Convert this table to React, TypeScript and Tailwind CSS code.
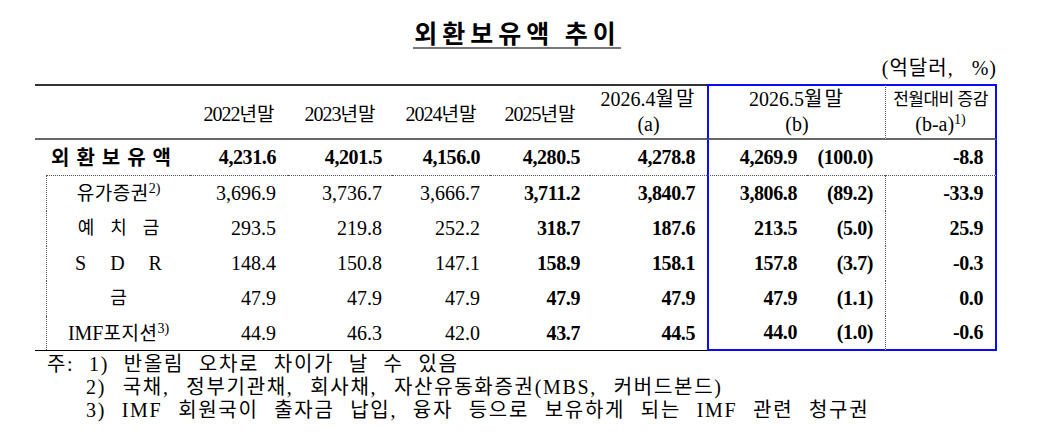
import React from 'react';

const cols = 'grid grid-cols-[155px_98px_104px_98px_100px_117px_100px_78px_112px]';
const pads = ['pr-[12px]', 'pr-[10px]', 'pr-[10px]', 'pr-[10px]', 'pr-[12px]', 'pr-[10px]', 'pr-[12px]', 'pr-[12px]'];
const BLUE = 'border-[#0a0aff]';

const total = ['4,231.6', '4,201.5', '4,156.0', '4,280.5', '4,278.8', '4,269.9', '(100.0)', '-8.8'];

const rows: { label: React.ReactNode; values: string[] }[] = [
  {
    label: (
      <span className="text-[19px] tracking-[0.5px]">
        유가증권<sup className="text-[14px] tracking-normal">2)</sup>
      </span>
    ),
    values: ['3,696.9', '3,736.7', '3,666.7', '3,711.2', '3,840.7', '3,806.8', '(89.2)', '-33.9'],
  },
  {
    label: (
      <span className="flex gap-[16px] text-[18px]">
        <span>예</span>
        <span>치</span>
        <span>금</span>
      </span>
    ),
    values: ['293.5', '219.8', '252.2', '318.7', '187.6', '213.5', '(5.0)', '25.9'],
  },
  {
    label: (
      <span className="flex gap-[24px]">
        <span>S</span>
        <span>D</span>
        <span>R</span>
      </span>
    ),
    values: ['148.4', '150.8', '147.1', '158.9', '158.1', '157.8', '(3.7)', '-0.3'],
  },
  {
    label: <span className="text-[18px]">금</span>,
    values: ['47.9', '47.9', '47.9', '47.9', '47.9', '47.9', '(1.1)', '0.0'],
  },
  {
    label: (
      <span>
        IMF<span className="text-[19px] tracking-[0.5px]">포지션</span>
        <sup className="text-[14px]">3)</sup>
      </span>
    ),
    values: ['44.9', '46.3', '42.0', '43.7', '44.5', '44.0', '(1.0)', '-0.6'],
  },
];

function YearHead({ year }: { year: string }) {
  return (
    <div className="flex items-center justify-center border-t-2 border-b-2 border-t-[#333] border-b-[#666] pt-[4px]">
      <span>
        <span className="tracking-[-1px]">{year}</span>
        <span className="text-[19px]">년말</span>
      </span>
    </div>
  );
}

function SubRow({ label, values, last }: { label: React.ReactNode; values: string[]; last: boolean }) {
  const bottom = last ? 'border-b border-b-black' : '';
  const blueBottom = last ? `border-b-2 ${BLUE}` : '';
  return (
    <div className={`${cols} h-[35px]`}>
      <div className={`pl-[11px] ${bottom}`}>
        <div className="flex h-full items-center justify-center border-l border-dotted border-[#555]">{label}</div>
      </div>
      {values.slice(0, 5).map((v, i) => (
        <div
          key={i}
          className={`flex items-center justify-end ${pads[i]} ${bottom} ${i >= 3 ? 'font-bold tracking-[-0.4px]' : ''}`}
        >
          {v}
        </div>
      ))}
      <div className={`flex items-center justify-end border-l-2 ${BLUE} ${blueBottom} ${pads[5]} font-bold tracking-[-0.4px]`}>
        {values[5]}
      </div>
      <div className={`flex items-center justify-end ${blueBottom} ${pads[6]} font-bold tracking-[-0.4px]`}>
        {values[6]}
      </div>
      <div
        className={`flex items-center justify-end border-l border-l-[#555] [border-left-style:dotted] border-r-2 border-r-[#0a0aff] ${blueBottom} ${pads[7]} font-bold tracking-[-0.4px]`}
      >
        {values[7]}
      </div>
    </div>
  );
}

export default function App() {
  return (
    <div className="h-[448px] w-[1054px] overflow-hidden bg-white pt-[17px] font-['Liberation_Serif','Noto_Sans_CJK_KR',serif] text-[20px] text-black">
      <div className="flex justify-center pr-[20px]">
        <h1 className="inline-block border-b-2 border-[#777] pl-[1px] font-['Noto_Sans_CJK_KR',sans-serif] text-[25px] font-bold leading-[30px] tracking-[5px]">
          외환보유액 추이
        </h1>
      </div>

      <div className="ml-[35px] w-[962px] pt-[8px] pb-[5px] text-right text-[20px] leading-[22px] tracking-[1px]">
        (억달러,&nbsp;&nbsp;&nbsp;%)
      </div>

      <div className="ml-[35px] w-[962px] leading-[25px]">
        {/* header */}
        <div className={`${cols} h-[56px]`}>
          <div className="border-t-2 border-b-2 border-t-[#333] border-b-[#666]" />
          <YearHead year="2022" />
          <YearHead year="2023" />
          <YearHead year="2024" />
          <YearHead year="2025" />
          <div className="flex flex-col items-center justify-center border-t-2 border-b-2 border-t-[#333] border-b-[#666]">
            <span>
              2026.4<span className="tracking-[2px]">월말</span>
            </span>
            <span>(a)</span>
          </div>
          <div className={`col-span-2 flex flex-col items-center justify-center border-t-2 border-l-2 ${BLUE} border-b-2 border-b-[#666]`}>
            <span>
              2026.5<span className="tracking-[2px]">월말</span>
            </span>
            <span>(b)</span>
          </div>
          <div className="flex flex-col items-center justify-center border-t-2 border-r-2 border-t-[#0a0aff] border-r-[#0a0aff] border-b-2 border-b-[#666] border-l border-l-[#555] [border-left-style:dotted]">
            <span className="text-[17px] tracking-[-0.5px]">전월대비 증감</span>
            <span>
              (b-a)<sup className="text-[14px]">1)</sup>
            </span>
          </div>
        </div>

        {/* total */}
        <div className={`${cols} h-[36px] font-bold`}>
          <div className="flex flex-col">
            <div className="flex flex-1 items-center justify-center pt-[2px] pl-[4px] text-[20px] tracking-[7px]">외환보유액</div>
            <div className="ml-[11px] border-b border-dotted border-[#555]" />
          </div>
          {total.slice(0, 5).map((v, i) => (
            <div key={i} className={`flex items-center justify-end border-b border-dotted border-[#555] ${pads[i]} tracking-[-0.4px]`}>
              {v}
            </div>
          ))}
          <div className={`flex items-center justify-end border-b border-dotted border-b-[#555] border-l-2 border-l-[#0a0aff] [border-left-style:solid] ${pads[5]} tracking-[-0.4px]`}>
            {total[5]}
          </div>
          <div className={`flex items-center justify-end border-b border-dotted border-[#555] ${pads[6]} tracking-[-0.4px]`}>
            {total[6]}
          </div>
          <div className={`flex items-center justify-end border-b border-dotted border-[#555] border-r-2 border-r-[#0a0aff] [border-right-style:solid] ${pads[7]} tracking-[-0.4px]`}>
            {total[7]}
          </div>
        </div>

        {rows.map((r, i) => (
          <SubRow key={i} label={r.label} values={r.values} last={i === rows.length - 1} />
        ))}
      </div>

      <div className="pt-[2px] text-[20px] leading-[23px] tracking-[1.7px]">
        <p className="pl-[47px] [word-spacing:8px]">주: 1) 반올림 오차로 차이가 날 수 있음</p>
        <p className="pl-[86px] [word-spacing:10px]">2) 국채, 정부기관채, 회사채, 자산유동화증권(MBS, 커버드본드)</p>
        <p className="pl-[86px] [word-spacing:9px]">3) IMF 회원국이 출자금 납입, 융자 등으로 보유하게 되는 IMF 관련 청구권</p>
      </div>
    </div>
  );
}
